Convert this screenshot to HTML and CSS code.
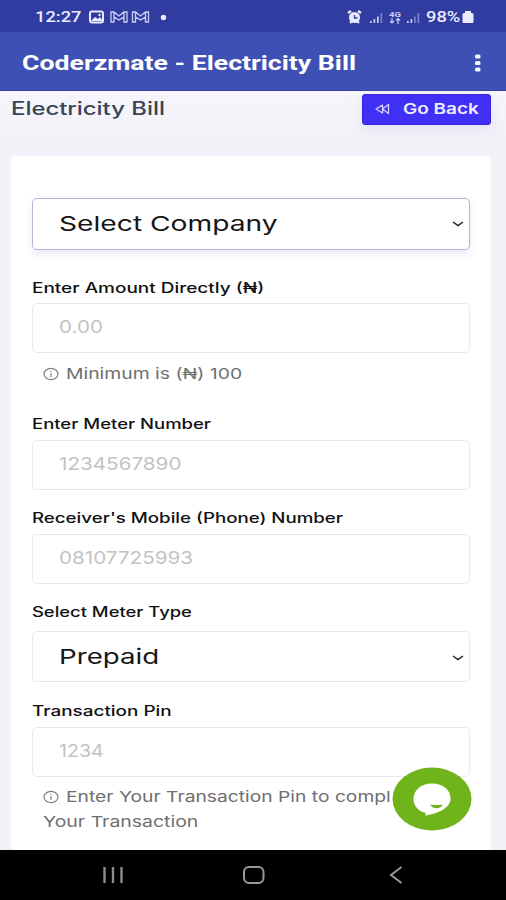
FILE: index.html
```html
<!DOCTYPE html>
<html lang="en">
<head>
<meta charset="utf-8">
<title>Coderzmate - Electricity Bill</title>
<link rel="stylesheet" href="styles.css">
</head>
<body>
<div class="phone">
  <div class="status">
    <span class="wide clock">12:27</span>
    <svg class="status-left" width="80" height="16" viewBox="0 0 80 16">
      <rect x="1" y="2.500" width="13" height="11" rx="2" fill="none" stroke="#e9ebff" stroke-width="2"/>
      <path d="M2 12l4-4 3 2 2-2 3 4z" fill="#e9ebff"/><circle cx="10.500" cy="6" r="1.200" fill="#e9ebff"/>
      <g fill="none" stroke="#c9cdf5" stroke-width="1.300"><path d="M22 3v10h3V8l5 3 5-3v5h3V3h-3l-5 4-5-4zM25 8V3M35 8V3"/><path d="M43.500 3v10h3V8l5 3 5-3v5h3V3h-3l-5 4-5-4zM46.500 8V3M56.500 8V3"/></g>
      <circle cx="74.500" cy="8.500" r="2.700" fill="#e9ebff"/>
    </svg>
    <svg class="status-right" width="76" height="16" viewBox="0 0 76 16">
      <circle cx="7.500" cy="8.500" r="5.500" fill="#e9ebff"/><path d="M1 4l3-2M14 4l-3-2M3 14l2-2M12 14l-2-2" stroke="#e9ebff" stroke-width="2.400"/><path d="M7.500 6v3h3" fill="none" stroke="#303c9f" stroke-width="1.300"/>
      <g fill="#c9cdf5"><path d="M23 12h1.700v2H23zM26.500 10h1.700v4h-1.700zM30 7.500h1.700V14H30z"/><path opacity=".5" d="M33.500 4h1.700v10h-1.700z"/><path d="M60 12h1.700v2H60zM63.500 10h1.700v4h-1.700z"/><path opacity=".5" d="M67 7.500h1.700V14H67zM70.500 4h1.700v10h-1.700z"/></g>
      <text x="42" y="7.500" class="network" textLength="12" lengthAdjust="spacingAndGlyphs">4G</text>
      <path d="M45 9v5M43 12l2 2 2-2M51 15v-5M49 11.500l2-2 2 2" stroke="#c9cdf5" fill="none" stroke-width="1.200"/>
    </svg>
    <span class="wide percent">98%</span>
    <svg class="battery" width="12" height="14" viewBox="0 0 12 14"><path d="M3 1h6v2h1q1.500 0 1.500 1.500V12q0 1-1 1h-9q-1 0-1-1V4.500Q.5 3 2 3h1z" fill="#e9ebff"/></svg>
  </div>
  <header class="appbar">
    <span class="wide title">Coderzmate - Electricity Bill</span>
    <svg class="dots" width="8" height="20" viewBox="0 0 8 20" fill="#f4f5ff"><rect x="1" y="1.500" width="5.500" height="4" rx="1.500"/><rect x="1" y="8" width="5.500" height="4" rx="1.500"/><rect x="1" y="14.500" width="5.500" height="4" rx="1.500"/></svg>
  </header>
  <main class="content">
    <div class="page-head">
      <h1><span class="wide heading">Electricity Bill</span></h1>
      <a class="back">
        <svg width="16" height="12" viewBox="0 0 16 12" fill="none" stroke="#d5d0ff" stroke-width="1.300" stroke-linejoin="round"><path d="M7.500 2v8L1 6zM13.500 1.500v9L7.500 6z"/></svg>
        <span class="wide back-text">Go Back</span>
      </a>
    </div>
    <form class="card">
      <div class="field select focused company">
        <span class="wide value v-company">Select Company</span>
        <svg class="chevron" width="12" height="6" viewBox="0 0 12 6"><path d="M1 1l5 3.500L11 1"/></svg>
      </div>
      <div class="label l-amount"><span class="wide">Enter Amount Directly (₦)</span></div>
      <div class="field"><span class="wide hint h-amount">0.00</span></div>
      <div class="help"><svg class="info" width="16" height="14" viewBox="0 0 16 14"><ellipse cx="8" cy="7" rx="7" ry="5.700"/><path d="M8 6v4M8 3.800v1.200"/></svg><span class="wide help-min">Minimum is (₦) 100</span></div>
      <div class="label l-meter"><span class="wide">Enter Meter Number</span></div>
      <div class="field"><span class="wide hint h-meter">1234567890</span></div>
      <div class="label l-phone"><span class="wide">Receiver's Mobile (Phone) Number</span></div>
      <div class="field"><span class="wide hint h-phone">08107725993</span></div>
      <div class="label l-type"><span class="wide">Select Meter Type</span></div>
      <div class="field select">
        <span class="wide value v-type">Prepaid</span>
        <svg class="chevron" width="12" height="6" viewBox="0 0 12 6"><path d="M1 1l5 3.500L11 1"/></svg>
      </div>
      <div class="label l-pin"><span class="wide">Transaction Pin</span></div>
      <div class="field"><span class="wide hint h-pin">1234</span></div>
      <div class="help pin-note"><svg class="info" width="16" height="14" viewBox="0 0 16 14"><ellipse cx="8" cy="7" rx="7" ry="5.700"/><path d="M8 6v4M8 3.800v1.200"/></svg><span class="wide help-pin">Enter Your Transaction Pin to compl</span></div>
      <div class="help second"><span class="wide help-pin2">Your Transaction</span></div>
    </form>
    <svg class="chat" width="80" height="64" viewBox="0 0 80 64">
      <ellipse cx="40" cy="32" rx="39.500" ry="31.500" fill="#70b41c"/>
      <path d="M40 16.500C29 16.500 21.500 23 21.500 32C21.500 39 26.500 44.500 34 46L33 48.500C44 47 58.500 42 58.500 31.500C58.500 23 51 16.500 40 16.500z" fill="#fff"/>
      <path d="M38 37.500q6.500 1.200 13 0q-2 3.700-6.500 3.700T38 37.500z" fill="#70b41c"/>
    </svg>
  </main>
  <nav class="navbar">
    <svg width="22" height="18" viewBox="0 0 22 18" stroke="#8d8d8d" stroke-width="2.400"><path d="M2.500 1v16M11 1v16M19.500 1v16"/></svg>
    <svg class="home" width="24" height="18" viewBox="0 0 24 18" fill="none" stroke="#999" stroke-width="2"><rect x="2" y="1" width="19.500" height="16" rx="5"/></svg>
    <svg width="14" height="18" viewBox="0 0 14 18" fill="none" stroke="#999" stroke-width="2"><path d="M12.500 1L2 9l10.500 8"/></svg>
  </nav>
</div>
</body>
</html>
```
FILE: styles.css
```css
* { box-sizing: border-box; }
body { margin: 0; font-family: Inter, "Open Sans", sans-serif; }
.phone { width: 506px; height: 900px; display: flex; flex-direction: column; overflow: hidden; background: #f2f1f8; }
.wide { display: inline-block; white-space: nowrap; transform: scaleX(var(--sx, 1.35)); transform-origin: left center; }
.status { height: 32px; flex: none; background: #303c9f; display: flex; align-items: center; color: #e9ebff; font: 500 15px/20px Roboto, sans-serif; padding: 2px 0 0 35px; }
.clock { width: 54px; --sx: 1.22; }
.status-left { margin-right: 178px; }
.status-right { margin-right: 3px; }
.percent { width: 36px; --sx: 1.22; }
.network { font: 700 7.5px Roboto, sans-serif; fill: #c9cdf5; }
.appbar { height: 59px; flex: none; background: #3e50b4; border-bottom: 1px solid #3443a5; display: flex; align-items: center; justify-content: space-between; padding: 3px 24px 0 22px; color: #fff; }
.title { font: 700 20.5px/28px Roboto, sans-serif; --sx: 1.3; }
.content { flex: 1; min-height: 0; position: relative; padding: 3px 15px 0 11px; background: linear-gradient(#f5f5fb, #f2f1f8 60px); }
.page-head { height: 62px; display: flex; justify-content: space-between; align-items: flex-start; }
h1 { margin: 2px 0 0; font-size: 18px; font-weight: 500; line-height: 25px; color: #384557; }
.heading { --sx: 1.325; }
.back { width: 129px; height: 31px; display: flex; align-items: center; gap: 12px; padding: 0 0 2px 12px; background: #4030f5; border: 1px solid #3625df; border-radius: 3px; color: #efedff; font-size: 15px; font-weight: 600; box-shadow: 0 5px 12px #d9d7ef80; }
.back-text { --sx: 1.267; }
.card { height: 694px; background: #fff; border-radius: 4px; padding: 42px 21px 0; }
.field { height: 50px; border: 1px solid #e9e9ec; border-radius: 5px; display: flex; align-items: center; justify-content: space-between; padding: 0 5px 3px 26px; background: #fff; }
.select { height: 51px; padding-bottom: 0; }
.company { height: 52px; padding-bottom: 2px; }
.focused { border-color: #b7b5d3; box-shadow: 0 4px 10px #e8e7f6; }
.value { font-size: 20.5px; color: #161616; }
.v-company { --sx: 1.375; }
.hint { font-size: 17.5px; color: #c3c3c5; --sx: 1.18; }
.h-pin { --sx: 1.12; }
.chevron { fill: none; stroke: #222; stroke-width: 1.5; margin-top: 2px; }
.label { font-size: 14px; line-height: 20px; font-weight: 500; color: #111; }
.l-amount { margin: 28px 0 5px; --sx: 1.355; }
.l-meter { margin: 28px 0 6px; --sx: 1.32; }
.l-phone { margin: 18px 0 6px; --sx: 1.335; }
.l-type { margin: 18px 0 9px; --sx: 1.313; }
.l-pin { margin: 19px 0 6px; }
.help { height: 25px; margin: 8px 0 0 11px; display: flex; align-items: center; gap: 7px; color: #6e6f70; font-size: 15px; }
.pin-note { margin-top: 7px; }
.second { margin-top: 0; }
.help-min { --sx: 1.29; }
.help-pin { --sx: 1.283; }
.help-pin2 { --sx: 1.296; }
.info { fill: none; stroke: #808080; stroke-width: 1.2; }
.chat { position: absolute; right: 34px; top: 676px; }
.navbar { height: 50px; flex: none; background: #000; display: flex; align-items: center; gap: 118px; padding-left: 102px; }
.home { margin-right: 5px; }
```
